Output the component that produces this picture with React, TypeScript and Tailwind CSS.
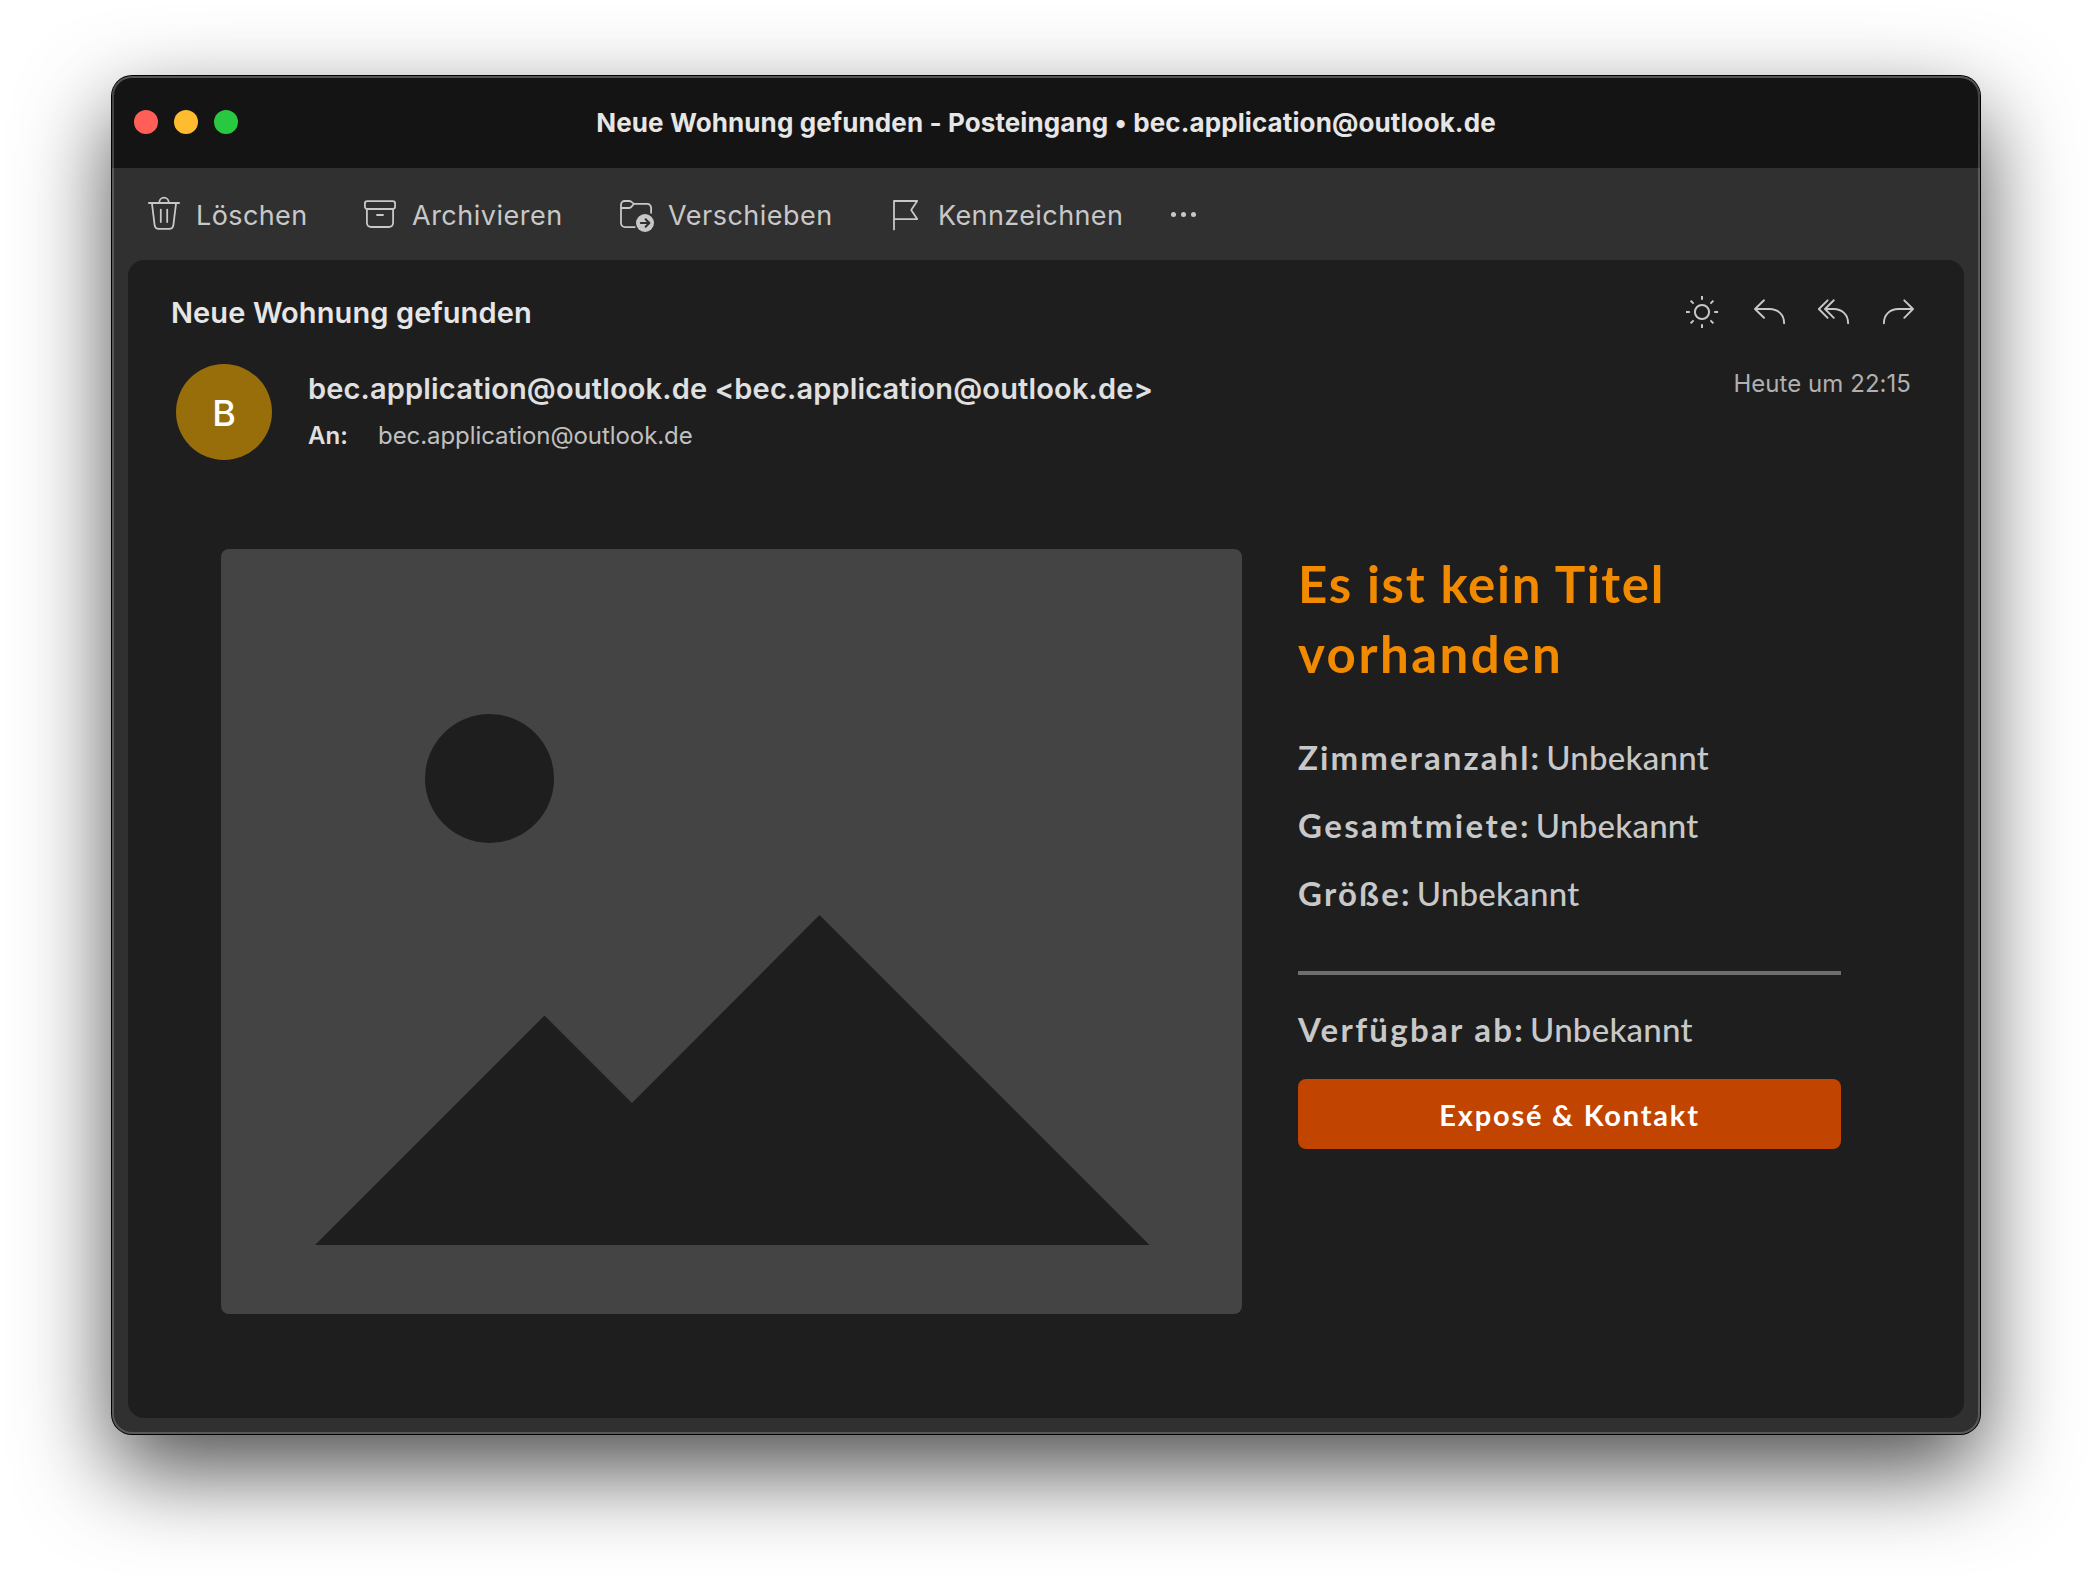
import type { ReactNode } from "react";

function Icon({ w, h = 36, sw = 1.8, className = "", children }: { w: number; h?: number; sw?: number; className?: string; children: ReactNode }) {
  return (
    <svg
      width={w}
      height={h}
      viewBox={`0 0 ${w} ${h}`}
      fill="none"
      stroke="currentColor"
      strokeWidth={sw}
      strokeLinecap="round"
      strokeLinejoin="round"
      className={`shrink-0 ${className}`}
    >
      {children}
    </svg>
  );
}

function TrashIcon() {
  return (
    <Icon w={32}>
      <path d="M.9 7H31.1M11.3 7V6.4a4.7 4.7 0 0 1 9.4 0V7M3.9 7 6.6 28.8A4.4 4.4 0 0 0 11 32.8H21a4.4 4.4 0 0 0 4.4-4L28.1 7M12.8 13.6V26M19.2 13.6V26" />
    </Icon>
  );
}

function ArchiveIcon() {
  return (
    <Icon w={32}>
      <rect x=".9" y="5.1" width="30.2" height="7.9" rx="2.4" />
      <path d="M2.9 13V26.8A4.2 4.2 0 0 0 7.1 31H24.9A4.2 4.2 0 0 0 29.1 26.8V13M13 19H19" />
    </Icon>
  );
}

function MoveIcon() {
  return (
    <Icon w={35}>
      <path d="M14.8 31.1H5A4 4 0 0 1 1 27.1V8.6A3.6 3.6 0 0 1 4.6 5H9.4C12.2 5 12.2 7.9 14.8 7.9H27.3a3.8 3.8 0 0 1 3.8 3.8V16.8M1 12H9.2C12.4 12 12.2 7.9 14.8 7.9" />
      <circle cx="25" cy="27" r="9" fill="currentColor" stroke="none" />
      <path d="M20.8 27H29M25.6 23.2 29.4 27 25.6 30.8" stroke="#303030" strokeWidth="2" />
    </Icon>
  );
}

function FlagIcon() {
  return (
    <Icon w={27}>
      <path d="M2 33.4V5H25.2L19.2 14.1 25.2 23.1H2" />
    </Icon>
  );
}

function SunIcon() {
  return (
    <Icon w={32} sw={2}>
      <circle cx="16" cy="18" r="7.1" />
      <path
        strokeLinecap="butt"
        d="M16 2V5.8M16 30.2V34M0 18H3.8M28.2 18H32M4.6 6.6 7.6 9.6M24.4 26.4 27.4 29.4M27.4 6.6 24.4 9.6M7.6 26.4 4.6 29.4"
      />
    </Icon>
  );
}

function ReplyIcon() {
  return (
    <Icon w={32} sw={1.9}>
      <path d="M10 6.3 1 15 10 23.8M1 15H15.5C24 15 30.1 20.6 30.1 29.2" />
    </Icon>
  );
}

function ReplyAllIcon() {
  return (
    <Icon w={32} sw={1.9}>
      <path d="M9.6 6.3.9 15 9.6 23.8M15.8 6.3 7 15 15.8 23.8M7 15H15.5C24 15 30.1 20.6 30.1 29.2" />
    </Icon>
  );
}

function ForwardIcon() {
  return (
    <Icon w={32} sw={1.9}>
      <path d="M22.3 6.3 31 15 22.3 23.8M31 15H16.5C8 15 1.9 20.6 1.9 29.2" />
    </Icon>
  );
}

function TitleBar() {
  return (
    <div className="relative flex h-[92px] shrink-0 items-center bg-[#141414] pl-[22px]">
      <div className="flex gap-4">
        <span className="size-6 rounded-full bg-[#ff5f57]" />
        <span className="size-6 rounded-full bg-[#febc2e]" />
        <span className="size-6 rounded-full bg-[#28c840]" />
      </div>
      <h1 className="absolute inset-0 text-center text-[26px] leading-[93px] font-bold tracking-[0.1px] text-[#e6e6e6]">
        Neue Wohnung gefunden - Posteingang • bec.application@outlook.de
      </h1>
    </div>
  );
}

function Toolbar() {
  return (
    <div className="flex h-[92px] shrink-0 items-center pl-9 text-[27px] leading-9 text-[#c8c8c8]">
      <button className="flex w-[216px] items-center gap-4">
        <TrashIcon />
        <span className="pt-1 tracking-[0.4px]">Löschen</span>
      </button>
      <button className="flex w-[256px] items-center gap-4">
        <ArchiveIcon />
        <span className="pt-1 tracking-[0.5px]">Archivieren</span>
      </button>
      <button className="flex w-[272px] items-center gap-[13px]">
        <MoveIcon />
        <span className="pt-1 tracking-[0.5px]">Verschieben</span>
      </button>
      <button className="flex w-[279px] items-center gap-[19px]">
        <FlagIcon />
        <span className="pt-1 tracking-[0.4px]">Kennzeichnen</span>
      </button>
      <button className="flex gap-[5px]">
        <span className="size-[5px] rounded-full bg-[#c8c8c8]" />
        <span className="size-[5px] rounded-full bg-[#c8c8c8]" />
        <span className="size-[5px] rounded-full bg-[#c8c8c8]" />
      </button>
    </div>
  );
}

function MessageHeader() {
  return (
    <header>
      <div className="flex h-9 items-center text-[#c8c8c8]">
        <h2 className="mr-auto pt-px pl-px text-[29px] leading-9 font-semibold tracking-[0.1px] text-[#e6e6e6]">Neue Wohnung gefunden</h2>
        <SunIcon />
        <span className="ml-9"><ReplyIcon /></span>
        <span className="ml-8"><ReplyAllIcon /></span>
        <span className="ml-8"><ForwardIcon /></span>
      </div>
      <div className="mt-[34px] flex pl-[6px]">
        <div className="flex size-24 items-center justify-center rounded-full bg-[#986e0b] pt-[2px] text-[36px] font-medium text-white">B</div>
        <div className="ml-9 pt-[7px]">
          <div className="text-[29px] leading-9 font-semibold tracking-[0.16px] text-[#e0e0e0]">
            bec.application@outlook.de &lt;bec.application@outlook.de&gt;
          </div>
          <div className="mt-[14px] flex text-2xl leading-[30px]">
            <span className="w-[70px] font-semibold text-[#e0e0e0]">An:</span>
            <span className="tracking-[-0.07px] text-[#c0c0c0]">bec.application@outlook.de</span>
          </div>
        </div>
        <time className="mt-[5px] mr-[3px] ml-auto text-2xl leading-[30px] tracking-[0.05px] text-[#b0b0b0]">Heute um 22:15</time>
      </div>
    </header>
  );
}

function Placeholder() {
  return (
    <svg width="1021" height="765" viewBox="0 0 1021 765" className="shrink-0 rounded-lg bg-[#444444]" fill="#1e1e1e">
      <circle cx="268.5" cy="229.5" r="64.5" />
      <path d="M94 696 323.5 466.5 411 554 598.5 366 928.5 696Z" />
    </svg>
  );
}

function Fact({ label, value, className }: { label: string; value: string; className: string }) {
  return (
    <div className="text-[33px] leading-[68px] whitespace-nowrap text-[#c8c8c8]">
      <span className={`font-bold ${className}`}>{label}</span>
      <span className="ml-[5px] font-medium tracking-[0.25px]">{value}</span>
    </div>
  );
}

function Details() {
  return (
    <section className="w-[543px] font-['Lato',sans-serif]">
      <h3 className="text-[51px] leading-[70px] font-bold text-[#f28a00]">
        <span className="block tracking-[1.7px]">Es ist kein Titel</span>
        <span className="block tracking-[2.5px]">vorhanden</span>
      </h3>
      <div className="mt-[34px]">
        <Fact label="Zimmeranzahl:" value="Unbekannt" className="tracking-[2.1px]" />
        <Fact label="Gesamtmiete:" value="Unbekannt" className="tracking-[2.4px]" />
        <Fact label="Größe:" value="Unbekannt" className="tracking-[2.2px]" />
      </div>
      <hr className="mt-[44px] mb-5 border-t-4 border-[#6e6e6e]" />
      <Fact label="Verfügbar ab:" value="Unbekannt" className="tracking-[2.3px]" />
      <button className="mt-4 block h-[70px] w-full rounded-lg bg-[#c14400] pt-px text-[29px] font-bold tracking-[1.8px] text-white">
        Exposé &amp; Kontakt
      </button>
    </section>
  );
}

export default function App() {
  return (
    <main className="h-[1582px] w-[2092px] overflow-hidden bg-white px-28 pt-[76px] font-['Inter',sans-serif]">
      <div className="relative flex h-[1358px] flex-col rounded-[20px] bg-[#303030] shadow-[0_0_0_1px_#000,0_36px_90px_rgba(0,0,0,0.7)]">
        <div className="flex flex-1 flex-col overflow-hidden rounded-[20px]">
          <TitleBar />
          <Toolbar />
          <article className="mx-4 mb-4 flex-1 rounded-2xl bg-[#1e1e1e] pt-[34px] pr-[50px] pl-[42px]">
            <MessageHeader />
            <div className="mt-[89px] flex gap-14 pl-[51px]">
              <Placeholder />
              <Details />
            </div>
          </article>
        </div>
        <div className="pointer-events-none absolute inset-0 rounded-[20px] shadow-[inset_0_0_0_2px_rgba(255,255,255,0.2),inset_0_2px_0_rgba(255,255,255,0.1)]" />
      </div>
    </main>
  );
}
